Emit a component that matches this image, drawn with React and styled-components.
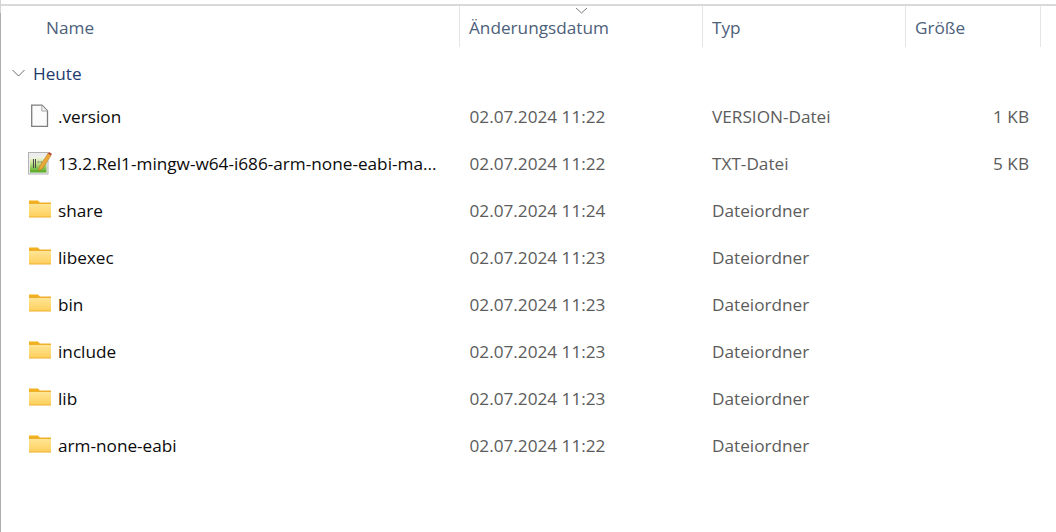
import React from 'react'
import styled, { createGlobalStyle } from 'styled-components'

const GlobalStyle = createGlobalStyle`
  html, body {
    margin: 0;
    background: #fff;
    font-family: "Open Sans", "Noto Sans", sans-serif;
  }
`

const files = [
  { name: '.version', date: '02.07.2024 11:22', type: 'VERSION-Datei', size: '1 KB', icon: 'file' },
  { name: '13.2.Rel1-mingw-w64-i686-arm-none-eabi-ma...', date: '02.07.2024 11:22', type: 'TXT-Datei', size: '5 KB', icon: 'text' },
  { name: 'share', date: '02.07.2024 11:24', type: 'Dateiordner', icon: 'folder' },
  { name: 'libexec', date: '02.07.2024 11:23', type: 'Dateiordner', icon: 'folder' },
  { name: 'bin', date: '02.07.2024 11:23', type: 'Dateiordner', icon: 'folder' },
  { name: 'include', date: '02.07.2024 11:23', type: 'Dateiordner', icon: 'folder' },
  { name: 'lib', date: '02.07.2024 11:23', type: 'Dateiordner', icon: 'folder' },
  { name: 'arm-none-eabi', date: '02.07.2024 11:22', type: 'Dateiordner', icon: 'folder' }
]

const Window = styled.div`
  width: 1056px;
  height: 532px;
  box-sizing: border-box;
  border-left: 1px solid;
  border-image: linear-gradient(#d4d4d4 14px, #adadad 14px) 1;
  padding-top: 4px;
  overflow: hidden;
`

const Header = styled.div`
  display: grid;
  grid-template-columns: 459px 243px 203px 135px;
  height: 41px;
  border-top: 2px solid #d9d9d9;
`

const HeaderCell = styled.div`
  position: relative;
  display: flex;
  align-items: center;
  box-sizing: border-box;
  height: 41px;
  padding-left: ${p => p.$pad}px;
  padding-top: 2px;
  border-right: 1px solid #e5e5e5;
  color: #4c607a;
  font-size: 17.2px;
`

const SortArrow = styled.svg`
  position: absolute;
  left: 115px;
  top: 1px;
`

const GroupRow = styled.div`
  display: flex;
  align-items: center;
  box-sizing: border-box;
  height: 46px;
  padding: 6px 0 0 11px;
  color: #1e3a6e;
  font-size: 17.2px;
`

const Chevron = styled.svg`
  margin-right: 7px;
`

const Row = styled.div`
  display: grid;
  grid-template-columns: 459px 243px 204px 122px;
  align-items: center;
  height: 47px;
  font-size: 17.2px;
`

const NameCell = styled.div`
  display: flex;
  align-items: center;
  gap: 7px;
  padding-left: 28px;
  color: #0b0b0b;
  white-space: nowrap;
`

const MetaCell = styled.div`
  padding-left: ${p => p.$pad}px;
  color: #5c5c5c;
  white-space: nowrap;
`

const SizeCell = styled.div`
  text-align: right;
  color: #5c5c5c;
`

const IconBox = styled.svg`
  flex: none;
  width: 22px;
  height: 24px;
  overflow: visible;
`

function FileIcon () {
  return (
    <IconBox viewBox="0 0 22 24">
      <path d="M2.700 0.200h10.300l5.500 5.500v15.600h-15.800z" fill="#fbfbfb" stroke="#7d7d7d" strokeWidth="1.300" />
      <path d="M12.800 0.500v5.500h5.500" fill="#f0f0f0" stroke="#a8a8a8" />
    </IconBox>
  )
}

function TextIcon () {
  return (
    <IconBox viewBox="0 0 22 24">
      <defs>
        <linearGradient id="noteFill" x1="0" y1="0" x2="0" y2="1">
          <stop offset="0" stopColor="#f3f7e8" />
          <stop offset="0.4" stopColor="#c5e08c" />
          <stop offset="1" stopColor="#4fa81f" />
        </linearGradient>
      </defs>
      <rect x="-0.500" y="0.500" width="19.500" height="21.500" fill="#ededed" stroke="#b2b2b2" />
      <rect x="1" y="5" width="16.500" height="15.500" fill="url(#noteFill)" />
      <path d="M4.500 7v9M6.500 7v9" stroke="#4a4a4a" fill="none" />
      <path d="M8.500 10h2M11.500 10h1.500" stroke="#6a6a6a" fill="none" />
      <path d="M9.500 19l1-4.500 8.500-13 3 2-8.500 13z" fill="#eba938" stroke="#a9701c" strokeWidth="0.500" />
      <path d="M19 1.500l1-1.500 3 2-1 1.500z" fill="#b8432f" />
    </IconBox>
  )
}

function FolderIcon () {
  return (
    <IconBox viewBox="0 0 22 24">
      <defs>
        <linearGradient id="folderFill" x1="0" y1="0" x2="0" y2="1">
          <stop offset="0" stopColor="#ffe595" />
          <stop offset="1" stopColor="#fdd05e" />
        </linearGradient>
      </defs>
      <path d="M0 1.500h9l2.500 3H0z" fill="#f3b11d" />
      <rect x="0" y="3.500" width="22" height="15" fill="#eeb02c" />
      <rect x="0" y="5" width="22" height="12.500" fill="url(#folderFill)" />
    </IconBox>
  )
}

const icons = { file: FileIcon, text: TextIcon, folder: FolderIcon }

function FileRow ({ file }) {
  const Icon = icons[file.icon]
  return (
    <Row>
      <NameCell>
        <Icon />
        {file.name}
      </NameCell>
      <MetaCell $pad={9.5}>{file.date}</MetaCell>
      <MetaCell $pad={9}>{file.type}</MetaCell>
      <SizeCell>{file.size}</SizeCell>
    </Row>
  )
}

export default function App () {
  return (
    <Window>
      <GlobalStyle />
      <Header>
        <HeaderCell $pad={45}>Name</HeaderCell>
        <HeaderCell $pad={9}>
          <SortArrow width="13" height="8" viewBox="0 0 13 8">
            <path d="M1 1l5.500 5 5.500-5" fill="none" stroke="#7a7a7a" />
          </SortArrow>
          Änderungsdatum
        </HeaderCell>
        <HeaderCell $pad={9}>Typ</HeaderCell>
        <HeaderCell $pad={9}>Größe</HeaderCell>
      </Header>
      <GroupRow>
        <Chevron width="14" height="8" viewBox="0 0 14 8">
          <path d="M0.500 1l6 6 6-6" fill="none" stroke="#6a6a6a" />
        </Chevron>
        Heute
      </GroupRow>
      {files.map(file => <FileRow key={file.name} file={file} />)}
    </Window>
  )
}
